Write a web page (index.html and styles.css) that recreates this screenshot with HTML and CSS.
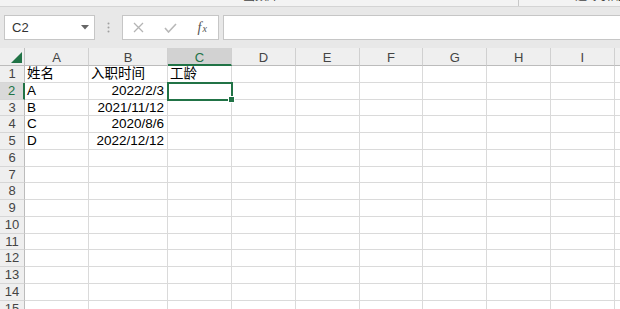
FILE: index.html
```html
<!DOCTYPE html>
<html lang="zh-CN">
<head>
  <meta charset="UTF-8">
  <title>工作簿1 - Excel</title>
  <link rel="stylesheet" href="styles.css">
</head>
<body>
  <div class="ribbon">
    <div class="ribbon-group first"><span>函数库</span></div>
    <div class="ribbon-group second"><span>追踪引用单元格</span></div>
  </div>

  <div class="formula-bar">
    <div class="name-box">
      <span>C2</span>
      <svg width="8" height="5" viewBox="0 0 8 5"><path d="M0 0h8L4 4.5z" fill="#666"/></svg>
    </div>
    <div class="dots">
      <svg width="3" height="11" viewBox="0 0 3 11"><circle cx="1.5" cy="1.5" r="1" fill="#a0a0a0"/><circle cx="1.5" cy="5.5" r="1" fill="#a0a0a0"/><circle cx="1.5" cy="9.5" r="1" fill="#a0a0a0"/></svg>
    </div>
    <div class="fx-buttons">
      <span class="fx-btn">
        <svg width="11" height="11" viewBox="0 0 11 11"><path d="M1 1l9 9M10 1l-9 9" stroke="#b4b4b4" stroke-width="1.3" fill="none"/></svg>
      </span>
      <span class="fx-btn">
        <svg width="13" height="10" viewBox="0 0 13 10"><path d="M1 5l3.5 4L12 1" stroke="#b8b8b8" stroke-width="1.6" fill="none"/></svg>
      </span>
      <span class="fx-btn fx">f<small>x</small></span>
    </div>
    <div class="formula-input"></div>
  </div>

  <div class="sheet">
    <div class="corner"><svg width="11" height="11" viewBox="0 0 11 11"><path d="M11 0v11H0z" fill="#217346"/></svg></div>
    <div class="ch">A</div><div class="ch">B</div><div class="ch active">C</div><div class="ch">D</div><div class="ch">E</div><div class="ch">F</div><div class="ch">G</div><div class="ch">H</div><div class="ch">I</div><div class="ch"></div>

    <div class="rh">1</div><div>姓名</div><div>入职时间</div><div>工龄</div><div></div><div></div><div></div><div></div><div></div><div></div><div></div>
    <div class="rh active">2</div><div>A</div><div class="num">2022/2/3</div><div class="selected"><span class="handle"></span></div><div></div><div></div><div></div><div></div><div></div><div></div><div></div>
    <div class="rh">3</div><div>B</div><div class="num">2021/11/12</div><div></div><div></div><div></div><div></div><div></div><div></div><div></div><div></div>
    <div class="rh">4</div><div>C</div><div class="num">2020/8/6</div><div></div><div></div><div></div><div></div><div></div><div></div><div></div><div></div>
    <div class="rh">5</div><div>D</div><div class="num">2022/12/12</div><div></div><div></div><div></div><div></div><div></div><div></div><div></div><div></div>
    <div class="rh">6</div><div></div><div></div><div></div><div></div><div></div><div></div><div></div><div></div><div></div><div></div>
    <div class="rh">7</div><div></div><div></div><div></div><div></div><div></div><div></div><div></div><div></div><div></div><div></div>
    <div class="rh">8</div><div></div><div></div><div></div><div></div><div></div><div></div><div></div><div></div><div></div><div></div>
    <div class="rh">9</div><div></div><div></div><div></div><div></div><div></div><div></div><div></div><div></div><div></div><div></div>
    <div class="rh">10</div><div></div><div></div><div></div><div></div><div></div><div></div><div></div><div></div><div></div><div></div>
    <div class="rh">11</div><div></div><div></div><div></div><div></div><div></div><div></div><div></div><div></div><div></div><div></div>
    <div class="rh">12</div><div></div><div></div><div></div><div></div><div></div><div></div><div></div><div></div><div></div><div></div>
    <div class="rh">13</div><div></div><div></div><div></div><div></div><div></div><div></div><div></div><div></div><div></div><div></div>
    <div class="rh">14</div><div></div><div></div><div></div><div></div><div></div><div></div><div></div><div></div><div></div><div></div>
    <div class="rh">15</div><div></div><div></div><div></div><div></div><div></div><div></div><div></div><div></div><div></div><div></div>
  </div>
</body>
</html>
```

FILE: styles.css
```css
html, body {
  margin: 0;
  height: 309px;
  overflow: hidden;
}

body {
  font-family: "Liberation Sans", "Noto Sans CJK SC", sans-serif;
  background: #fff;
  color: #000;
}

/* bottom edge of the ribbon, mostly scrolled away */
.ribbon {
  display: grid;
  grid-template-columns: 518px 1fr;
  height: 6px;
  background: #f3f3f3;
  border-bottom: 1px solid #d4d4d4;
  font-size: 12px;
  color: #444;
}

.ribbon-group {
  height: 6px;
  overflow: hidden;
  white-space: nowrap;
}

.ribbon-group span {
  display: block;
  line-height: 14px;
  margin-top: -11px;
}

.ribbon-group.first {
  padding-left: 243px;
}

.ribbon-group.second {
  border-left: 1px solid #c8c8c8;
  padding-left: 56px;
}

.formula-bar {
  display: flex;
  height: 25px;
  padding: 8px 0 8px 4px;
  background: #e8e8e8;
}

.name-box {
  display: flex;
  align-items: center;
  justify-content: space-between;
  width: 91px;
  box-sizing: border-box;
  padding: 0 5px 0 7px;
  background: #fff;
  border: 1px solid #c6c6c6;
  font-size: 13px;
  color: #333;
}

.dots {
  display: flex;
  align-items: center;
  justify-content: center;
  width: 27px;
}

.fx-buttons {
  display: flex;
  align-items: center;
  width: 97px;
  box-sizing: border-box;
  background: #fff;
  border: 1px solid #c6c6c6;
}

.fx-btn {
  display: flex;
  align-items: center;
  justify-content: center;
  width: 32px;
}

.fx {
  font-family: "Liberation Serif", serif;
  font-style: italic;
  font-size: 14px;
  color: #555;
}

.fx small {
  font-size: 10px;
  margin-left: 1px;
  position: relative;
  top: 1px;
}

.formula-input {
  flex: 1;
  margin-left: 4px;
  background: #fff;
  border: 1px solid #c6c6c6;
  border-right: none;
}

/* grid */
.sheet {
  display: grid;
  grid-template-columns: 25px 64px 79px 64px repeat(6, 63.8px) 40px;
  grid-template-rows: 18px;
  grid-auto-rows: 16.75px;
  font-size: 13.5px;
  line-height: 16px;
}

.sheet > div {
  box-sizing: border-box;
  border-right: 1px solid #dadada;
  border-bottom: 1px solid #dadada;
  padding: 0 2px;
  white-space: nowrap;
  overflow: hidden;
}

.sheet > .num {
  text-align: right;
  padding-right: 3px;
}

.sheet > .corner {
  display: flex;
  align-items: flex-end;
  justify-content: flex-end;
  padding: 0 2px 2px 0;
  background: #efefef;
  border-right-color: #c0c0c0;
  border-bottom-color: #bcbcbc;
}

.sheet > .ch {
  background: #efefef;
  border-right-color: #d0d0d0;
  border-bottom-color: #bcbcbc;
  text-align: center;
  padding-top: 2px;
  font-size: 13px;
  color: #444;
}

.sheet > .ch.active {
  background: #d2d2d2;
  border-bottom: 2px solid #217346;
  color: #217346;
}

.sheet > .rh {
  background: #efefef;
  border-right-color: #bcbcbc;
  border-bottom-color: #d6d6d6;
  text-align: center;
  padding: 0;
  font-size: 13px;
  color: #444;
}

.sheet > .rh.active {
  background: #d9d9d9;
  border-right: 2px solid #217346;
  color: #217346;
}

.sheet > .selected {
  position: relative;
  overflow: visible;
  outline: 2px solid #217346;
  outline-offset: -1px;
}

.handle {
  position: absolute;
  right: -4px;
  bottom: -4px;
  width: 5px;
  height: 5px;
  background: #217346;
  border: 1px solid #fff;
}
```
